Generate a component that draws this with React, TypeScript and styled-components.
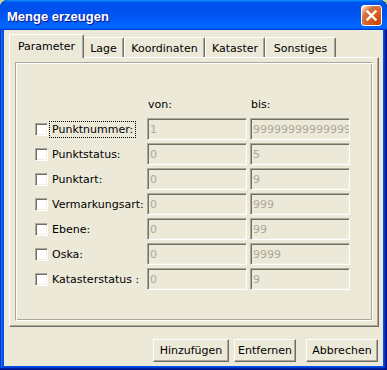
import styled, { createGlobalStyle } from 'styled-components';

const GlobalStyle = createGlobalStyle`
    html, body {
        margin: 0;
        padding: 0;
        background: #c8d88c;
    }
    body {
        font-family: 'DejaVu Sans', Tahoma, sans-serif;
        font-size: 11px;
        color: #000;
    }
`;

const Window = styled.div`
    width: 387px;
    height: 370px;
    box-sizing: border-box;
    display: flex;
    flex-direction: column;
    background: #0054e3;
    border-radius: 8px 8px 0 0;
    overflow: hidden;
    box-shadow: inset -1px -1px #00138c, inset 1px 1px #0831d9, inset -2px -2px #001ea0,
        inset 2px 2px #166aee, inset -3px -3px #003bda, inset 3px 3px #0855dd;
`;

const TitleBar = styled.div`
    flex: none;
    height: 30px;
    box-sizing: border-box;
    display: flex;
    align-items: center;
    justify-content: space-between;
    padding: 0 5px 0 7px;
    border-radius: 8px 8px 0 0;
    background: linear-gradient(180deg, #0997ff, #0053ee 8%, #0050ee 40%, #06f 88%, #06f 93%, #005bff 95%, #003dd7 96%, #003dd7);
`;

const Title = styled.span`
    padding-top: 2px;
    color: #fff;
    font: bold 13px 'Liberation Sans', Arial, sans-serif;
    text-shadow: 1px 1px #0f1089;
`;

const CloseButton = styled.div`
    width: 21px;
    height: 21px;
    box-sizing: border-box;
    display: flex;
    align-items: center;
    justify-content: center;
    border: 1px solid #fff;
    border-radius: 3px;
    background: radial-gradient(circle at 90% 90%, #cc4600 0%, #dc6527 55%, #cd7546 70%, #ffccb2 90%, #fff 100%);
`;

const Client = styled.div`
    flex: 1;
    margin: 0 4px 4px;
    padding-top: 4px;
    display: flex;
    flex-direction: column;
    background: #ece9d8;
`;

const TabStrip = styled.div`
    display: flex;
    align-items: flex-end;
    height: 23px;
    padding-left: 7px;
`;

const Tab = styled.div<{ $active?: boolean; $width: number }>`
    position: relative;
    z-index: ${p => (p.$active ? 1 : 0)};
    box-sizing: border-box;
    width: ${p => p.$width + (p.$active ? 3 : 0)}px;
    height: ${p => (p.$active ? 24 : 20)}px;
    margin: ${p => (p.$active ? '0 -1px -1px -2px' : '0')};
    padding-top: ${p => (p.$active ? 5 : 4)}px;
    text-align: center;
    line-height: 13px;
    white-space: nowrap;
    background: #ece9d8;
    border-top: 1px solid #fff;
    border-left: 1px solid #fff;
    border-right: 1px solid #716f64;
    border-radius: 2px 2px 0 0;
    box-shadow: inset -1px 0 #aca899;
`;

const Panel = styled.div`
    box-sizing: border-box;
    width: 370px;
    height: 270px;
    margin-left: 5px;
    padding: 4px 5px 5px 5px;
    display: flex;
    border-top: 1px solid #fff;
    border-left: 1px solid #fff;
    border-right: 1px solid #716f64;
    border-bottom: 1px solid #716f64;
    box-shadow: inset -1px -1px #aca899;
`;

const GroupBox = styled.div`
    flex: 1;
    box-sizing: border-box;
    padding: 30px 0 0 19px;
    display: grid;
    grid-template-columns: 109px 100px 100px;
    grid-auto-rows: 22px;
    column-gap: 3px;
    row-gap: 3px;
    align-content: start;
    border-top: 1px solid #aca899;
    border-left: 1px solid #aca899;
    border-right: 1px solid #fff;
    border-bottom: 1px solid #fff;
    box-shadow: inset 1px 1px #fff, inset -1px -1px #aca899;
`;

const Header = styled.div`
    display: flex;
    align-items: center;
    padding-left: 1px;
    line-height: 13px;
`;

const CheckCell = styled.div`
    display: flex;
    align-items: center;
    white-space: nowrap;
`;

const CheckBox = styled.span`
    flex: none;
    width: 13px;
    height: 13px;
    box-sizing: border-box;
    background: #fff;
    border-top: 1px solid #aca899;
    border-left: 1px solid #aca899;
    border-right: 1px solid #fff;
    border-bottom: 1px solid #fff;
    box-shadow: inset 1px 1px #716f64, inset -1px -1px #f1efe2;
`;

const Label = styled.span<{ $focused?: boolean }>`
    margin-left: 1px;
    padding: 1px 2px;
    line-height: 13px;
    border: 1px dotted ${p => (p.$focused ? '#000' : 'transparent')};
`;

const Field = styled.input`
    width: 100px;
    height: 22px;
    box-sizing: border-box;
    margin: 0;
    padding: 0 0 0 2px;
    font: inherit;
    color: #aca899;
    -webkit-text-fill-color: #aca899;
    opacity: 1;
    background: #ece9d8;
    outline: none;
    border-top: 1px solid #aca899;
    border-left: 1px solid #aca899;
    border-right: 1px solid #fff;
    border-bottom: 1px solid #fff;
    border-radius: 0;
    box-shadow: inset 1px 1px #716f64, inset -1px -1px #f1efe2;
`;

const Footer = styled.div`
    display: flex;
    justify-content: flex-end;
    margin-top: 12px;
    padding-right: 5px;
    gap: 5px;
`;

const Button = styled.button<{ $width: number; $gap?: number }>`
    width: ${p => p.$width}px;
    height: 23px;
    margin: 0 0 0 ${p => p.$gap ?? 0}px;
    padding: 0;
    box-sizing: border-box;
    font: inherit;
    color: #000;
    background: #ece9d8;
    border-top: 1px solid #fff;
    border-left: 1px solid #fff;
    border-right: 1px solid #716f64;
    border-bottom: 1px solid #716f64;
    border-radius: 0;
    box-shadow: inset -1px -1px #aca899;
`;

const tabs = [
    { label: 'Parameter', width: 72 },
    { label: 'Lage', width: 41 },
    { label: 'Koordinaten', width: 81 },
    { label: 'Kataster', width: 60 },
    { label: 'Sonstiges', width: 71 },
];

const rows = [
    { label: 'Punktnummer:', from: '1', to: '99999999999999' },
    { label: 'Punktstatus:', from: '0', to: '5' },
    { label: 'Punktart:', from: '0', to: '9' },
    { label: 'Vermarkungsart:', from: '0', to: '999' },
    { label: 'Ebene:', from: '0', to: '99' },
    { label: 'Oska:', from: '0', to: '9999' },
    { label: 'Katasterstatus :', from: '0', to: '9' },
];

export default function App() {
    return (
        <>
            <GlobalStyle />
            <Window>
                <TitleBar>
                    <Title>Menge erzeugen</Title>
                    <CloseButton>
                        <svg width="11" height="11" viewBox="0 0 11 11">
                            <path d="M1.5 1.5 L9.5 9.5 M9.5 1.5 L1.5 9.5" stroke="#fff" strokeWidth="2.4" strokeLinecap="square" />
                        </svg>
                    </CloseButton>
                </TitleBar>
                <Client>
                    <TabStrip>
                        {tabs.map((t, i) => (
                            <Tab key={t.label} $active={i === 0} $width={t.width}>{t.label}</Tab>
                        ))}
                    </TabStrip>
                    <Panel>
                        <GroupBox>
                            <div />
                            <Header>von:</Header>
                            <Header>bis:</Header>
                            {rows.map((r, i) => [
                                <CheckCell key={`c${i}`}>
                                    <CheckBox />
                                    <Label $focused={i === 0}>{r.label}</Label>
                                </CheckCell>,
                                <Field key={`f${i}`} disabled value={r.from} readOnly />,
                                <Field key={`t${i}`} disabled value={r.to} readOnly />,
                            ])}
                        </GroupBox>
                    </Panel>
                    <Footer>
                        <Button $width={76}>Hinzufügen</Button>
                        <Button $width={62}>Entfernen</Button>
                        <Button $width={72} $gap={5}>Abbrechen</Button>
                    </Footer>
                </Client>
            </Window>
        </>
    );
}
